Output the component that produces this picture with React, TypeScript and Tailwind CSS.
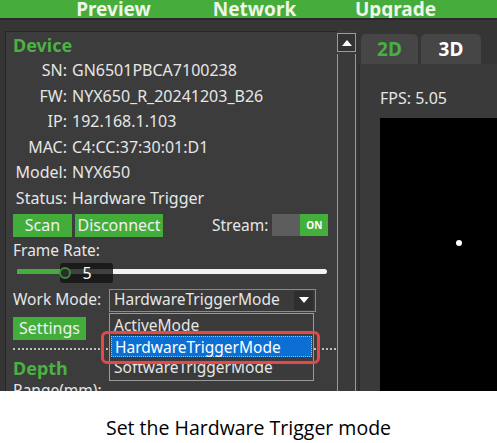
export default function App() {
  const rows: [string, string][] = [
    ["SN:", "GN6501PBCA7100238"],
    ["FW:", "NYX650_R_20241203_B26"],
    ["IP:", "192.168.1.103"],
    ["MAC:", "C4:CC:37:30:01:D1"],
    ["Model:", "NYX650"],
    ["Status:", "Hardware Trigger"],
  ];
  return (
    <div className="w-[497px] h-[443px] bg-white overflow-hidden font-['Noto_Sans',sans-serif]">
      <div className="h-[391px] bg-[#353535] flex flex-col overflow-hidden">
        {/* header */}
        <div className="h-[18px] shrink-0 bg-[#46ad3c] flex pl-[43px] overflow-hidden">
          {["Preview", "Network", "Upgrade"].map((t) => (
            <div key={t} className="w-[141px] text-center text-[19px] font-bold leading-[18px] text-[#eef6e8]">
              {t}
            </div>
          ))}
        </div>
        <div className="h-[2px] bg-[#2a2a2a] shrink-0" />
        <div className="flex flex-1 pt-[11px] min-h-0">
          {/* left panel */}
          <div className="ml-[5px] w-[332px] h-[400px] border-l border-t border-[#262626] bg-[#3c3c3c] text-[#e6e6e6] text-[15.5px] relative shrink-0">
            <div className="pl-[7px] pt-[3px] leading-[20px] text-[18px] font-bold text-[#4cb143]">Device</div>
            <div className="mt-[3px] pl-[7px] text-[16px]">
              {rows.map(([k, v]) => (
                <div key={k} className="flex h-[25.6px] leading-[25.6px] items-center">
                  <div className="w-[54px] text-right whitespace-nowrap">{k}</div>
                  <div className="ml-[5px] whitespace-nowrap">{v}</div>
                </div>
              ))}
            </div>
            <div className="pl-[7px] flex items-center h-[23px] mt-[2px]">
              <div className="w-[59px] h-[23px] bg-[#42ad3a] text-[#f0f0f0] text-center leading-[23px] text-[16px]">Scan</div>
              <div className="w-[88px] h-[23px] ml-[3px] bg-[#42ad3a] text-[#f0f0f0] text-center leading-[23px] text-[16px]">Disconnect</div>
              <div className="ml-[49px] leading-[23px]">Stream:</div>
              <div className="ml-[4px] flex h-[22px]">
                <div className="w-[28px] bg-[#5d5d5d]" />
                <div className="w-[28px] bg-[#44b03c] text-white text-[10px] font-bold flex items-center justify-center">ON</div>
              </div>
            </div>
            <div className="pl-[7px] mt-[2px] leading-[22px]">Frame Rate:</div>
            <div className="relative h-[22px] ml-[11px] w-[310px] flex items-center">
              <div className="w-full h-[5px] rounded-full bg-[#f2f2f2] flex">
                <div className="w-[45px] h-full rounded-l-full bg-[#46ad3c]" />
              </div>
              <div className="absolute left-[43px] top-[2px] w-[53px] h-[20px] rounded-[3px] bg-[#111111]/80 flex items-center">
                <div className="w-[12px] h-[12px] -ml-[1px] rounded-full bg-[#2c2c2c] border-2 border-[#3e8a36]" />
                <div className="flex-1 text-center text-white text-[16px] leading-[20px] pr-[10px]">5</div>
              </div>
            </div>
            <div className="pl-[7px] mt-[6px] flex items-center h-[23px]">
              <div className="w-[96px] whitespace-nowrap">Work Mode:</div>
              <div className="w-[207px] h-[23px] border border-[#8a8a8a] bg-[#3a3a3a] flex items-center">
                <div className="flex-1 pl-[4px] whitespace-nowrap">HardwareTriggerMode</div>
                <div className="w-[19px] h-[19px] mr-[2px] bg-[#2e2e2e] flex items-center justify-center">
                  <div className="w-0 h-0 border-l-[5px] border-r-[5px] border-t-[6px] border-l-transparent border-r-transparent border-t-white" />
                </div>
              </div>
            </div>
            <div className="pl-[7px] mt-[5px]">
              <div className="w-[73px] h-[23px] bg-[#42ad3a] text-[#f0f0f0] text-center leading-[23px] text-[16px]">Settings</div>
            </div>
            <div className="ml-[7px] mr-[1px] mt-[8px] border-t-2 border-dotted border-[#bdbdbd]" />
            <div className="pl-[7px] mt-[8px] leading-[20px] text-[18px] font-bold text-[#4cb143]">Depth</div>
            <div className="pl-[7px] mt-[2px] leading-[20px]">Range(mm):</div>

            {/* dropdown menu */}
            <div className="absolute left-[103px] top-[281px] w-[205px] h-[68px] border border-[#9a9a9a] bg-[#3b3b3b] p-[1px]">
              <div className="h-[21px] leading-[21px] pl-[3px]">ActiveMode</div>
              <div className="h-[21px] leading-[21px] pl-[3px] bg-[#0c6fd3] text-white border border-dotted border-[#9cc4f0]">HardwareTriggerMode</div>
              <div className="h-[21px] leading-[21px] pl-[3px]">SoftwareTriggerMode</div>
            </div>
            <div className="absolute left-[95px] top-[299px] w-[219px] h-[33px] border-[3px] border-[#e5484a] rounded-[6px]" />
          </div>
          {/* scrollbar */}
          <div className="w-[19px] shrink-0 flex flex-col pt-[2px] bg-[#3a3a3a]">
            <div className="h-[19px] border border-[#9a9a9a] bg-[#333] flex items-center justify-center">
              <div className="w-0 h-0 border-l-[5px] border-r-[5px] border-b-[6px] border-l-transparent border-r-transparent border-b-white" />
            </div>
            <div className="flex-1 mt-[2px] border-l border-r border-[#9a9a9a] bg-[#3a3a3a]" />
          </div>
          {/* right panel */}
          <div className="flex-1 flex flex-col ml-[2px]">
            <div className="flex gap-[3px] pl-[3px] pt-[3px] h-[33px] shrink-0">
              <div className="w-[57px] rounded-t-[5px] bg-[#464646] text-[#49b040] font-bold text-[19px] flex items-center justify-center">2D</div>
              <div className="w-[60px] rounded-t-[5px] bg-[#464646] text-white font-bold text-[19px] flex items-center justify-center">3D</div>
            </div>
            <div className="flex-1 bg-[#3a3a3a] border-l-2 border-[#2e2e2e] pl-[20px]">
              <div className="mt-[24px] text-[16px] leading-[20px] text-[#e6e6e6]">FPS: 5.05</div>
              <div className="mt-[10px] h-[400px] bg-black relative">
                <div className="absolute left-[76px] top-[122px] w-[6px] h-[6px] rounded-full bg-white" />
              </div>
            </div>
          </div>
        </div>
      </div>
      <div className="h-[52px] flex items-center justify-center pt-[22px] text-[19.5px] text-black font-['Open_Sans',sans-serif]">
        Set the Hardware Trigger mode
      </div>
    </div>
  );
}
